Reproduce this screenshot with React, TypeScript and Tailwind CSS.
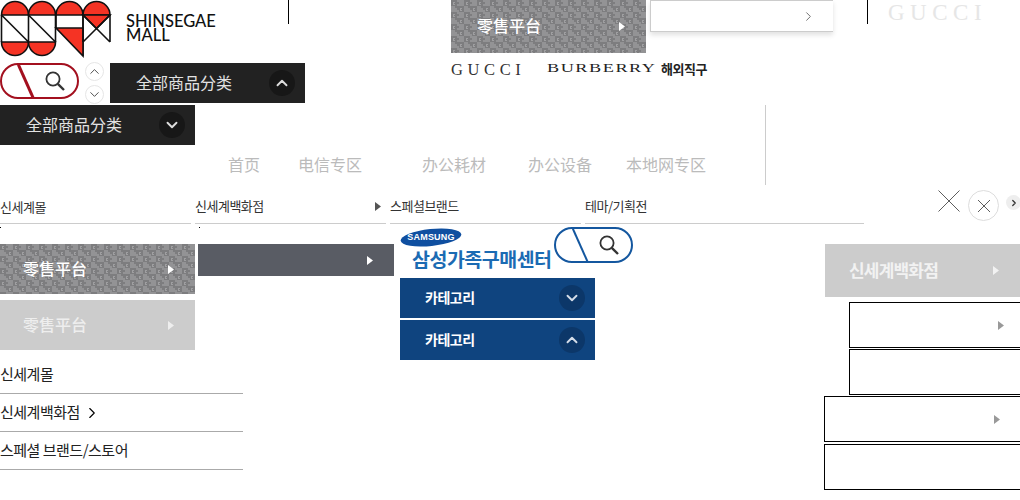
import { ChevronDown, ChevronRight, ChevronUp } from 'lucide-react'

const kr = "font-['Noto_Sans_CJK_KR','Noto_Sans',sans-serif]"
const sc = "font-['Noto_Sans_CJK_SC','Noto_Sans',sans-serif]"
const serif = "font-['Liberation_Serif',serif]"

function Logo() {
  return (
    <svg className="shrink-0" width="112" height="58" viewBox="0 0 112 58" fill="none" stroke="#111" strokeWidth="1.6">
      <path d="M1.5 15A13.5 13.5 0 0 1 28.5 15Z" fill="#f53324" />
      <path d="M28.5 15A13.5 13.5 0 0 1 55.5 15Z" fill="#f53324" />
      <path d="M56 15A13.5 13.5 0 0 1 83 15Z" fill="#f53324" />
      <path d="M83 15A13.5 13.5 0 0 1 110 15Z" fill="#f53324" />
      <path d="M1.5 42A13.5 13.5 0 0 0 28.5 42Z" fill="#f53324" />
      <path d="M28.5 42A13.5 13.5 0 0 0 55.5 42Z" fill="#f53324" />
      <path d="M1.5 15V42M28.5 15V42M55.5 15V42M1.5 15L28.5 42M28.5 15L55.5 42" />
      <path d="M56 15V28M83 15V56" />
      <path d="M56 28H83V56Z" fill="#f53324" />
      <path d="M83 15H110L96.5 28.5Z" fill="#f53324" />
      <path d="M83 15L110 42M110 15L83 42M110 15V42M83 15V42" />
    </svg>
  )
}

function Magnifier() {
  return (
    <svg className="w-5 h-5" viewBox="0 0 20 20" fill="none" stroke="#333" strokeWidth="1.8">
      <circle cx="8" cy="8" r="6.6" />
      <path d="M12.8 12.8L19 19" strokeWidth="2.4" />
    </svg>
  )
}

function Arrow({ className = '' }: { className?: string }) {
  return (
    <svg className={className} width="6" height="9" viewBox="0 0 6 9" fill="currentColor">
      <path d="M0 0L6 4.5L0 9Z" />
    </svg>
  )
}

function RedPill() {
  return (
    <div className="relative shrink-0 w-[79px] h-9 rounded-full border-[2.5px] border-[#a3101f] overflow-hidden flex items-center justify-end pr-[12px]">
      <div className="absolute left-[23px] -top-[2px] w-[2.5px] h-10 bg-[#a3101f] -rotate-[24deg]" />
      <Magnifier />
    </div>
  )
}

function BluePill() {
  return (
    <div className="relative shrink-0 w-[79px] h-9 rounded-full border-2 border-[#14579f] overflow-hidden flex items-center justify-end pr-[12px]">
      <div className="absolute left-[24px] -top-[2px] w-[2px] h-10 bg-[#14579f] -rotate-[24deg]" />
      <Magnifier />
    </div>
  )
}

// gray houndstooth tile behind the 零售平台 banners
function Tweed({ id }: { id: string }) {
  return (
    <svg className="absolute inset-0 w-full h-full" aria-hidden="true" shapeRendering="crispEdges">
      <defs>
        <pattern id={id} width="13" height="12" patternUnits="userSpaceOnUse">
          <rect width="13" height="12" fill="#939395" />
          <path d="M0 0H6V2H8V4H6V6H0ZM6 6H13V12H8V10H6V8H4V6Z" fill="#7d7d7f" />
          <path d="M2 2H4V3H2ZM2 3H3V4H4V5H2ZM9 8H11V9H9ZM9 9H10V10H11V11H9Z" fill="#9f9fa1" />
        </pattern>
      </defs>
      <rect width="100%" height="100%" fill={`url(#${id})`} />
    </svg>
  )
}

function DarkBar({ open }: { open: boolean }) {
  return (
    <div className="shrink-0 w-[195px] h-10 bg-[#222222] flex items-center pl-[26px] pr-[10px] justify-between">
      <span className={`${sc} text-base leading-none pb-[3px] text-[#e2e2e2]`}>全部商品分类</span>
      <span className="w-[26px] h-[26px] rounded-full bg-[#171717] flex items-center justify-center text-[#dddddd]">
        {open ? <ChevronUp size={18} strokeWidth={2.5} /> : <ChevronDown size={18} strokeWidth={2.5} />}
      </span>
    </div>
  )
}

function BlueBar({ open }: { open: boolean }) {
  return (
    <div className="w-[195px] h-10 bg-[#0f447f] flex items-center pl-[25px] pr-[10px] justify-between">
      <span className={`${kr} text-sm leading-none pb-[3px] font-bold tracking-[-0.5px] text-white`}>카테고리</span>
      <span className="w-[26px] h-[26px] rounded-full bg-[#0c3769] flex items-center justify-center text-[#d5dde8]">
        {open ? <ChevronUp size={18} strokeWidth={2.5} /> : <ChevronDown size={18} strokeWidth={2.5} />}
      </span>
    </div>
  )
}

function TweedBanner({ id, height, padLeft }: { id: string; height: string; padLeft: string }) {
  return (
    <div className={`relative w-[195px] ${height} ${padLeft} flex items-center justify-between pr-[21px] text-white`}>
      <Tweed id={id} />
      <span className={`${sc} relative text-base leading-none pb-[3px] font-medium`}>零售平台</span>
      <Arrow className="relative" />
    </div>
  )
}

const navItems = [
  { label: '首页', cls: 'w-[70px]' },
  { label: '电信专区', cls: 'w-[124px]' },
  { label: '办公耗材', cls: 'w-[106px]' },
  { label: '办公设备', cls: 'w-[98px]' },
  { label: '本地网专区', cls: 'w-[80px]' },
]

const listItems = ['신세계몰', '신세계백화점', '스페셜 브랜드/스토어']

export default function App() {
  return (
    <div className="w-[1020px] h-[500px] overflow-hidden bg-white flex flex-col">
      {/* header sprites */}
      <div className="h-[105px] flex">
        <div className="w-[305px] shrink-0 flex flex-col">
          <div className="h-[63px] flex items-start">
            <Logo />
            <div className="w-[176px] pl-[14px] pt-[14px] font-['Lato',sans-serif] text-[16.5px] leading-[14px] font-medium text-[#111]">
              <p>SHINSEGAE</p>
              <p>MALL</p>
            </div>
            <div className="w-px h-6 bg-black" />
          </div>
          <div className="flex items-start">
            <RedPill />
            <div className="ml-[6px] -mt-px flex flex-col gap-1 text-[#444]">
              <span className="w-[19px] h-[19px] rounded-full border border-[#e6e6e6] flex items-center justify-center"><ChevronUp size={15} strokeWidth={1.5} /></span>
              <span className="w-[19px] h-[19px] rounded-full border border-[#e6e6e6] flex items-center justify-center"><ChevronDown size={15} strokeWidth={1.5} /></span>
            </div>
            <div className="ml-[6px]"><DarkBar open /></div>
          </div>
        </div>
        <div className="pl-[146px] flex flex-col">
          <div className="h-[60px] flex items-start">
            <TweedBanner id="tweed-a" height="h-[53px]" padLeft="pl-[26px]" />
            <div className="ml-[4px] w-[183px] h-[32px] border border-r-0 border-[#cccccc] shadow-[0_3px_5px_rgba(0,0,0,0.12)] flex items-center justify-end pr-[17px] text-[#666]">
              <ChevronRight size={15} strokeWidth={1.5} />
            </div>
            <div className="ml-[34px] w-px h-6 bg-black" />
            <span className={`${serif} ml-[20px] mt-px text-[23px] leading-[24px] tracking-[5.5px] text-[#e6e6e6] whitespace-nowrap`}>GUCCI</span>
          </div>
          <div className="flex items-start text-[#333]">
            <span className={`${serif} w-[96px] pt-px text-[16.5px] leading-[18px] tracking-[4.6px]`}>GUCCI</span>
            <span className="w-[114px] pt-px">
              <span className={`${serif} block origin-left scale-x-[1.4] text-[13px] leading-[13px] tracking-[1.1px] text-[#222] whitespace-nowrap`}>BURBERRY</span>
            </span>
            <span className={`${kr} text-[13px] leading-[18px] font-bold tracking-[-0.5px] text-[#222] whitespace-nowrap`}>해외직구</span>
          </div>
        </div>
      </div>

      {/* second bar + nav */}
      <div className="h-[80px] flex">
        <DarkBar open={false} />
        <div className={`${sc} ml-[33px] w-[537px] pt-[47px] flex text-base leading-[24px] text-[#bbbbbb]`}>
          {navItems.map((item) => (
            <span key={item.label} className={`${item.cls} whitespace-nowrap`}>{item.label}</span>
          ))}
        </div>
        <div className="w-px h-full bg-[#cccccc]" />
      </div>

      {/* tabs + close buttons */}
      <div className="h-[39px] pt-[5px] flex items-start">
        <div className={`${kr} flex gap-1 text-[13px] leading-[18px] tracking-[-0.5px] text-[#333]`}>
          <div className="w-[191px] h-[34px] border-b border-[#cccccc] pt-[8px]">신세계몰</div>
          <div className="w-[191px] h-[34px] border-b border-[#cccccc] pt-[7px] flex justify-between pr-[5px]">
            신세계백화점
            <Arrow className="mt-[5px] text-[#555]" />
          </div>
          <div className="w-[191px] h-[34px] border-b border-[#cccccc] pt-[7px]">스페셜브랜드</div>
          <div className="w-[279px] h-[34px] border-b border-[#cccccc] pt-[7px]">테마/기획전</div>
        </div>
        <svg className="ml-[74px] shrink-0" width="22" height="22" viewBox="0 0 22 22" stroke="#333" strokeWidth="0.8">
          <path d="M0.5 0.5L21.5 21.5M21.5 0.5L0.5 21.5" />
        </svg>
        <div className="ml-[8px] shrink-0 w-[31px] h-[31px] rounded-full border border-[#dddddd] flex items-center justify-center">
          <svg width="14" height="14" viewBox="0 0 14 14" stroke="#333" strokeWidth="0.8">
            <path d="M1 1L13 13M13 1L1 13" />
          </svg>
        </div>
        <div className="ml-[7px] mt-[5px] shrink-0 w-[15px] h-[15px] rounded-full bg-[#eeeeee] flex items-center justify-center text-[#333]">
          <ChevronRight size={10} strokeWidth={3} />
        </div>
      </div>

      {/* lower columns */}
      <div className="flex">
        <div className="w-[198px] shrink-0 pt-[3px]">
          <div className="w-px h-px bg-black" />
          <div className="mt-[16px]"><TweedBanner id="tweed-b" height="h-[50px]" padLeft="pl-[23px]" /></div>
          <div className="mt-[6px] w-[195px] h-[50px] bg-[#cccccc] flex items-center justify-between pl-[23px] pr-[21px] text-[#eeeeee]">
            <span className={`${sc} text-base leading-none pb-[3px] font-medium`}>零售平台</span>
            <Arrow />
          </div>
          <ul className={`${kr} mt-[6px] w-[243px] text-[15px] tracking-[-0.5px] text-[#222]`}>
            {listItems.map((item, i) => (
              <li key={item} className="h-[38px] border-b border-[#aaaaaa] flex items-center gap-[3px]">
                <span className="leading-none pb-[3px]">{item}</span>
                {i === 1 && <ChevronRight size={18} strokeWidth={1.5} className="text-black" />}
              </li>
            ))}
          </ul>
        </div>

        <div className="w-[202px] shrink-0 pt-[3px]">
          <div className="ml-px w-px h-px bg-black" />
          <div className="mt-[16px] w-[196px] h-8 bg-[#595c64] flex items-center justify-end pr-[21px] text-white">
            <Arrow />
          </div>
        </div>

        <div className="w-[425px] shrink-0 pt-[3px]">
          <div className="h-[51px] flex items-start">
            <div className="w-[154px]">
              <svg className="block" width="62" height="21" viewBox="0 0 62 21">
                <ellipse cx="31" cy="10.5" rx="30.5" ry="8.5" transform="rotate(-6 31 10.5)" fill="#0f4fa0" />
                <text x="31" y="12.5" textAnchor="middle" fontFamily="Liberation Sans" fontSize="9" fontWeight="700" fill="#fff" letterSpacing="0.2">SAMSUNG</text>
              </svg>
              <div className={`${kr} ml-[12px] -mt-[3px] text-[19.5px] leading-[28px] font-bold tracking-[-0.5px] text-[#1b6bb3] whitespace-nowrap`}>삼성가족구매센터</div>
            </div>
            <BluePill />
          </div>
          <div className="flex flex-col gap-[2px]">
            <BlueBar open={false} />
            <BlueBar open />
          </div>
        </div>

        <div className="w-[195px] shrink-0 pt-[20px]">
          <div className="h-[53px] bg-[#cccccc] flex items-center justify-between pl-[24px] pr-[21px] text-[#f2f2f2]">
            <span className={`${kr} text-[17px] leading-none pb-[3px] font-bold tracking-[-0.8px] whitespace-nowrap`}>신세계백화점</span>
            <Arrow />
          </div>
          <div className="mt-[5px] ml-[24px] flex flex-col gap-[1px]">
            <div className="w-[195px] h-[46px] shrink-0 border border-black flex items-center pl-[148px] text-[#999]"><Arrow /></div>
            <div className="w-[195px] h-[46px] shrink-0 border border-black" />
          </div>
          <div className="mt-[1px] -ml-px flex flex-col gap-[2px]">
            <div className="w-[220px] h-[46px] shrink-0 border border-black flex items-center pl-[169px] text-[#999]"><Arrow /></div>
            <div className="w-[220px] h-[46px] shrink-0 border border-black" />
          </div>
        </div>
      </div>
    </div>
  )
}
